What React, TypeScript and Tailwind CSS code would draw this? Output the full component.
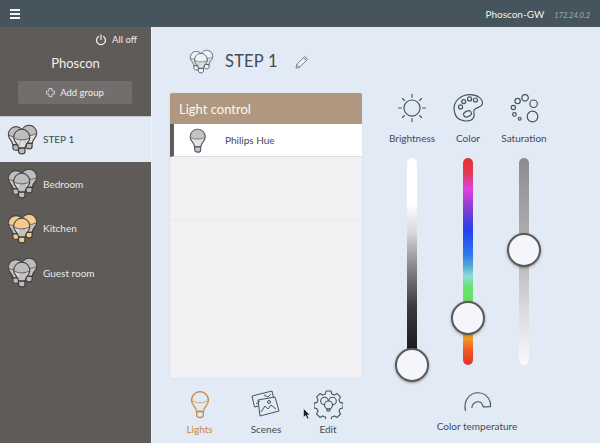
import React from "react";

function Bulb({ x = 0, y = 0, s = 1, fill = "#c4c4c4", stroke = "#4a4745", sw = 1.3 }: any) {
  return (
    <g transform={`translate(${x} ${y}) scale(${s})`}>
      <path d="M6.5 19c-.3-2.500-1.200-3.700-2.400-5.100C3 12.600 2.200 11 2.200 9.200 2.200 5 5.600 1.800 9.500 1.800s7.300 3.200 7.300 7.400c0 1.800-.8 3.400-1.900 4.700-1.200 1.400-2.100 2.600-2.400 5.100z" fill="#dcdcdc" fillOpacity={fill === "none" ? 0 : 0.8} stroke={stroke} strokeWidth={sw} strokeLinejoin="round" />
      <path d="M2.300 9.500C2.300 5 5.600 1.800 9.500 1.800s7.200 3.200 7.200 7.700c-2 1.300-4.500 1.900-7.200 1.900s-5.200-.6-7.200-1.900z" fill={fill} stroke={stroke} strokeWidth={sw * 0.6} />
      <path d="M6.600 19h5.800v3.200c0 1-1.200 2-2.900 2s-2.900-1-2.900-2z" fill={fill} stroke={stroke} strokeWidth={sw} strokeLinejoin="round" />
    </g>
  );
}

function Bulbs({ fill = "#c4c4c4", stroke = "#3f3c3a", size = 29, sw = 1.1 }: any) {
  return (
    <svg width={size} height={size} viewBox="0 0 30 30" className="shrink-0 overflow-visible">
      <Bulb x={-2} y={0} s={1.08} fill={fill} stroke={stroke} sw={sw} />
      <Bulb x={11.500} y={-1.500} s={1.08} fill={fill} stroke={stroke} sw={sw} />
      <Bulb x={3.500} y={2.500} s={1.13} fill={fill} stroke={stroke} sw={sw} />
    </svg>
  );
}

function GroupRow({ name, active, warm }: { name: string; active?: boolean; warm?: boolean }) {
  return (
    <div className={active ? "flex h-[44.5px] items-center gap-[6px] bg-[#e2eaf5] pl-[8px] text-[#3d4a53]" : "flex h-[44.5px] items-center gap-[6px] pl-[8px] text-[#e9e8e6]"}>
      <Bulbs fill={warm ? "#f6c98c" : "#bdbdbd"} />
      <span className="text-[10px] leading-none">{name}</span>
    </div>
  );
}

function Slider({ track, thumbTop }: { track: string; thumbTop: number }) {
  return (
    <div className="relative flex w-[56px] justify-center">
      <div className="h-[207px] w-[10px] rounded-full" style={{ background: track }} />
      <div
        className="absolute left-[11px] h-[34px] w-[34px] rounded-full border-[2px] border-[#5a5a5a] bg-[#f4f6fb] shadow-[0_1px_3px_rgba(0,0,0,0.35)]"
        style={{ top: thumbTop }}
      />
    </div>
  );
}

export default function App() {
  return (
    <div className="flex h-[443px] w-[600px] flex-col overflow-hidden bg-[#e2eaf5] font-['Lato','Open_Sans',sans-serif]">
      <header className="flex h-[27px] shrink-0 items-center justify-between bg-[#46545e] pl-[10px] pr-[10px]">
        <div className="flex w-[10px] flex-col gap-[2px]">
          <span className="h-[2px] bg-[#f2f4f6]" />
          <span className="h-[2px] bg-[#f2f4f6]" />
          <span className="h-[2px] bg-[#f2f4f6]" />
        </div>
        <div className="flex items-baseline gap-[10px] pt-[1px]">
          <span className="text-[10px] text-[#eef0f2]">Phoscon-GW</span>
          <span className="text-[7.500px] italic text-[#a4acb2]">172.24.0.2</span>
        </div>
      </header>
      <div className="flex min-h-0 flex-1">
        <aside className="flex w-[152px] shrink-0 flex-col border-r border-[#eef2f8] bg-[#5e5b58]">
          <div className="flex h-[90px] shrink-0 flex-col border-b border-[#c7cbd0] text-[#f0efed]">
            <div className="flex items-center justify-end gap-[5px] pr-[14px] pt-[6px]">
              <svg width="12" height="12" viewBox="0 0 13 13" fill="none" stroke="#f4f4f4" strokeWidth="1.300" strokeLinecap="round">
                <path d="M6.500 1v5" />
                <path d="M3.800 2.800a4.800 4.800 0 1 0 5.400 0" />
              </svg>
              <span className="text-[9.500px]">All off</span>
            </div>
            <div className="mt-[7px] text-center text-[13px] leading-[18px]">Phoscon</div>
            <button className="ml-[18px] mt-[9px] flex h-[23px] w-[114px] items-center justify-center gap-[5px] rounded-[2px] bg-[#716e6d] text-[9.500px] text-[#f0efed]">
              <svg width="9" height="9" viewBox="0 0 9 9" fill="none" stroke="#d8d6d4" strokeWidth="0.9">
                <path d="M3 .5h3V3h2.500v3H6v2.500H3V6H.5V3H3z" />
              </svg>
              Add group
            </button>
          </div>
          <GroupRow name="STEP 1" active />
          <GroupRow name="Bedroom" />
          <GroupRow name="Kitchen" warm />
          <GroupRow name="Guest room" />
        </aside>

        <main className="flex min-w-0 flex-1 flex-col">
          <div className="flex h-[66px] shrink-0 items-center pl-[38px] pt-[3px] text-[#3f4c56]">
            <Bulbs fill="#eef2f8" stroke="#46545e" size={23} sw={1} />
            <span className="ml-[12px] text-[16.500px] leading-none tracking-[0.2px]">STEP 1</span>
            <svg className="ml-[17px]" width="14" height="14" viewBox="0 0 14 14" fill="#eef2f8" stroke="#6a7075" strokeWidth="0.9" strokeLinejoin="round">
              <path d="M1 13l.8-3.600L9.700 1.500l2.800 2.800-7.900 7.900z" />
              <path d="M8.500 2.700l2.800 2.800M1.800 9.400l2.800 2.800" fill="none" />
            </svg>
          </div>
          <div className="flex min-h-0 flex-1">
            <section className="ml-[18px] flex w-[192px] shrink-0 flex-col">
              <div className="flex h-[285px] flex-col overflow-hidden rounded-[2px] bg-[#f1f1f3] shadow-[0_0_2px_rgba(0,0,0,0.08)]">
                <div className="flex h-[31px] shrink-0 items-center bg-[#b09880] pl-[9px] pt-[3px] text-[13px] text-[#fbf9f7]">Light control</div>
                <div className="flex h-[33px] shrink-0 items-center border-b border-[#dcdde0] border-l-[4px] border-l-[#5e5b58] bg-white">
                  <svg width="19" height="27" viewBox="0 0 19 27" className="ml-[14px]">
                    <Bulb x={0} y={0.500} s={1.020} fill="#c4c4c4" stroke="#4f5a62" sw={1.100} />
                  </svg>
                  <span className="ml-[18px] text-[10px] text-[#3f4a52]">Philips Hue</span>
                </div>
                <div className="h-[64px] shrink-0 border-b border-[#e9e9ec]" />
              </div>
              <nav className="mt-[12px] flex pl-[7px] text-[10px] text-[#3f4c56]">
                <div className="flex w-[45px] flex-col items-center text-[#c78742]">
                  <svg width="22" height="30" viewBox="0 0 19 26" className="-mt-[1px]">
                    <Bulb x={0} y={0.500} s={1} fill="none" stroke="#cc8a45" sw={1.100} />
                  </svg>
                  <span className="mt-[4px] leading-[13px]">Lights</span>
                </div>
                <div className="ml-[21.500px] flex w-[45px] flex-col items-center">
                  <svg width="30" height="30" viewBox="0 0 30 30" fill="#e2eaf5" stroke="#46545e" strokeWidth="1" strokeLinejoin="round" className="-mt-[1px]">
                    <path d="M1 7l20-5 2.500 11-20 5z" />
                    <path d="M7 11l17-3 4 14-19 5z" />
                    <path d="M10 23l4-6 3 3 3-4 5 4" fill="none" />
                    <path d="M5 15l4-3M13 6l4 2 3-3" fill="none" />
                    <circle cx="18" cy="13" r="1.500" />
                  </svg>
                  <span className="mt-[4px] leading-[13px]">Scenes</span>
                </div>
                <div className="ml-[17px] flex w-[45px] flex-col items-center">
                  <svg width="29" height="30" viewBox="0 0 29 30" fill="none" stroke="#46545e" strokeWidth="1.100" strokeLinejoin="round" className="-mt-[1px]">
                    <path d="M12 2h5l.8 3 2.600 1.100 2.700-1.500 3.400 3.500-1.500 2.600 1.100 2.700 3 .7v4.800l-3 .8-1.100 2.600 1.500 2.700-3.400 3.400-2.700-1.500-2.600 1.100-.8 3h-5l-.7-3-2.700-1.100-2.600 1.500-3.500-3.400 1.500-2.700-1-2.600-3-.8v-4.800l3-.7 1-2.700-1.500-2.600 3.500-3.500 2.600 1.500 2.700-1.100z" />
                    <circle cx="10.500" cy="12" r="3.800" />
                    <circle cx="18.500" cy="12" r="3.800" />
                    <circle cx="14.500" cy="16" r="4" fill="#e2eaf5" />
                    <path d="M13 20h3v2h-3z" />
                  </svg>
                  <span className="mt-[4px] leading-[13px]">Edit</span>
                </div>
                <svg width="8" height="12" viewBox="0 0 8 12" className="absolute left-[303px] top-[408px]">
                  <path d="M.5.500v9l2.200-2 1.500 3.500 1.600-.7-1.500-3.300H7z" fill="#1b1b1b" stroke="#fff" strokeWidth="0.500" />
                </svg>
              </nav>
            </section>

            <section className="ml-[22px] flex w-[168px] shrink-0 flex-col">
              <div className="flex h-[65px] shrink-0 text-[10px] text-[#3f4c56]">
                <div className="flex w-[56px] flex-col items-center">
                  <svg width="30" height="30" viewBox="0 0 28 28" fill="none" stroke="#46545e" strokeWidth="1.100">
                    <circle cx="14" cy="14" r="7.500" />
                    <path d="M14 1v3.500M14 23.500V27M1 14h3.500M23.500 14H27M4.800 4.800l2.400 2.400M20.800 20.800l2.400 2.400M4.800 23.200l2.400-2.400M20.800 7.200l2.400-2.400" />
                  </svg>
                  <span className="mt-[9px] whitespace-nowrap leading-[13px]">Brightness</span>
                </div>
                <div className="flex w-[56px] flex-col items-center">
                  <svg width="32" height="30" viewBox="0 0 30 28" fill="none" stroke="#46545e" strokeWidth="1.100">
                    <path d="M2 16C1 8 8 1.500 17 1.500c7 0 12 4 11.500 8.500-.4 3.500-5.500 3-7.500 5.500-1.600 2 .5 4.500-.5 7-1.200 3-5 4-9 3.500C6 25.500 2.600 21.500 2 16z" />
                    <circle cx="8" cy="13" r="1.900" />
                    <circle cx="11" cy="8" r="1.900" />
                    <circle cx="16.500" cy="5.500" r="1.900" />
                    <circle cx="22" cy="6.500" r="1.900" />
                    <ellipse cx="14.500" cy="19.500" rx="3.800" ry="2.600" transform="rotate(-25 14.500 19.500)" />
                  </svg>
                  <span className="mt-[9px] leading-[13px]">Color</span>
                </div>
                <div className="flex w-[56px] flex-col items-center">
                  <svg width="32" height="30" viewBox="0 0 30 28" fill="none" stroke="#46545e" strokeWidth="1.100">
                    <circle cx="23" cy="22" r="5" />
                    <circle cx="24" cy="10" r="3.500" />
                    <circle cx="16" cy="4.500" r="3" />
                    <circle cx="9" cy="7.500" r="2.500" />
                    <circle cx="5" cy="13.500" r="2" />
                    <circle cx="6" cy="20" r="1.700" />
                    <circle cx="11" cy="24" r="1.300" />
                  </svg>
                  <span className="mt-[9px] leading-[13px]">Saturation</span>
                </div>
              </div>
              <div className="flex">
                <Slider
                  track="linear-gradient(#ffffff 0%, #ffffff 22%, #d8d8d8 36%, #8a8a8a 52%, #3a3a3a 72%, #111111 100%)"
                  thumbTop={190}
                />
                <Slider
                  track="linear-gradient(#e3302b 0%, #e33a50 7%, #df40e0 15%, #7c3fd0 25%, #2340ef 35%, #2f7cea 47%, #5cb0cf 53%, #8fdcd8 57%, #64e36e 63%, #6bdc5f 72%, #f3a62b 86%, #ec5a22 93%, #e3302b 100%)"
                  thumbTop={143}
                />
                <Slider
                  track="linear-gradient(#8c8c8c 0%, #b4b4b4 45%, #d6d6d6 70%, #fafafa 100%)"
                  thumbTop={75}
                />
              </div>
              <div className="ml-[18px] mt-[26px] flex flex-col items-center text-[10px] text-[#3f4c56]">
                <svg width="29" height="21" viewBox="0 0 28 20" fill="none" stroke="#46545e" strokeWidth="1.100" strokeLinejoin="round">
                  <path d="M2.500 19C0 10 6 1.500 14.500 1.500c5.500 0 10 3.500 12 9.500v4l-7 .2c-.5-3-2.500-5-5-5-3.500 0-6 3-6 6" />
                </svg>
                <span className="mt-[8px] leading-[13px]">Color temperature</span>
              </div>
            </section>
          </div>
        </main>
      </div>
    </div>
  );
}
